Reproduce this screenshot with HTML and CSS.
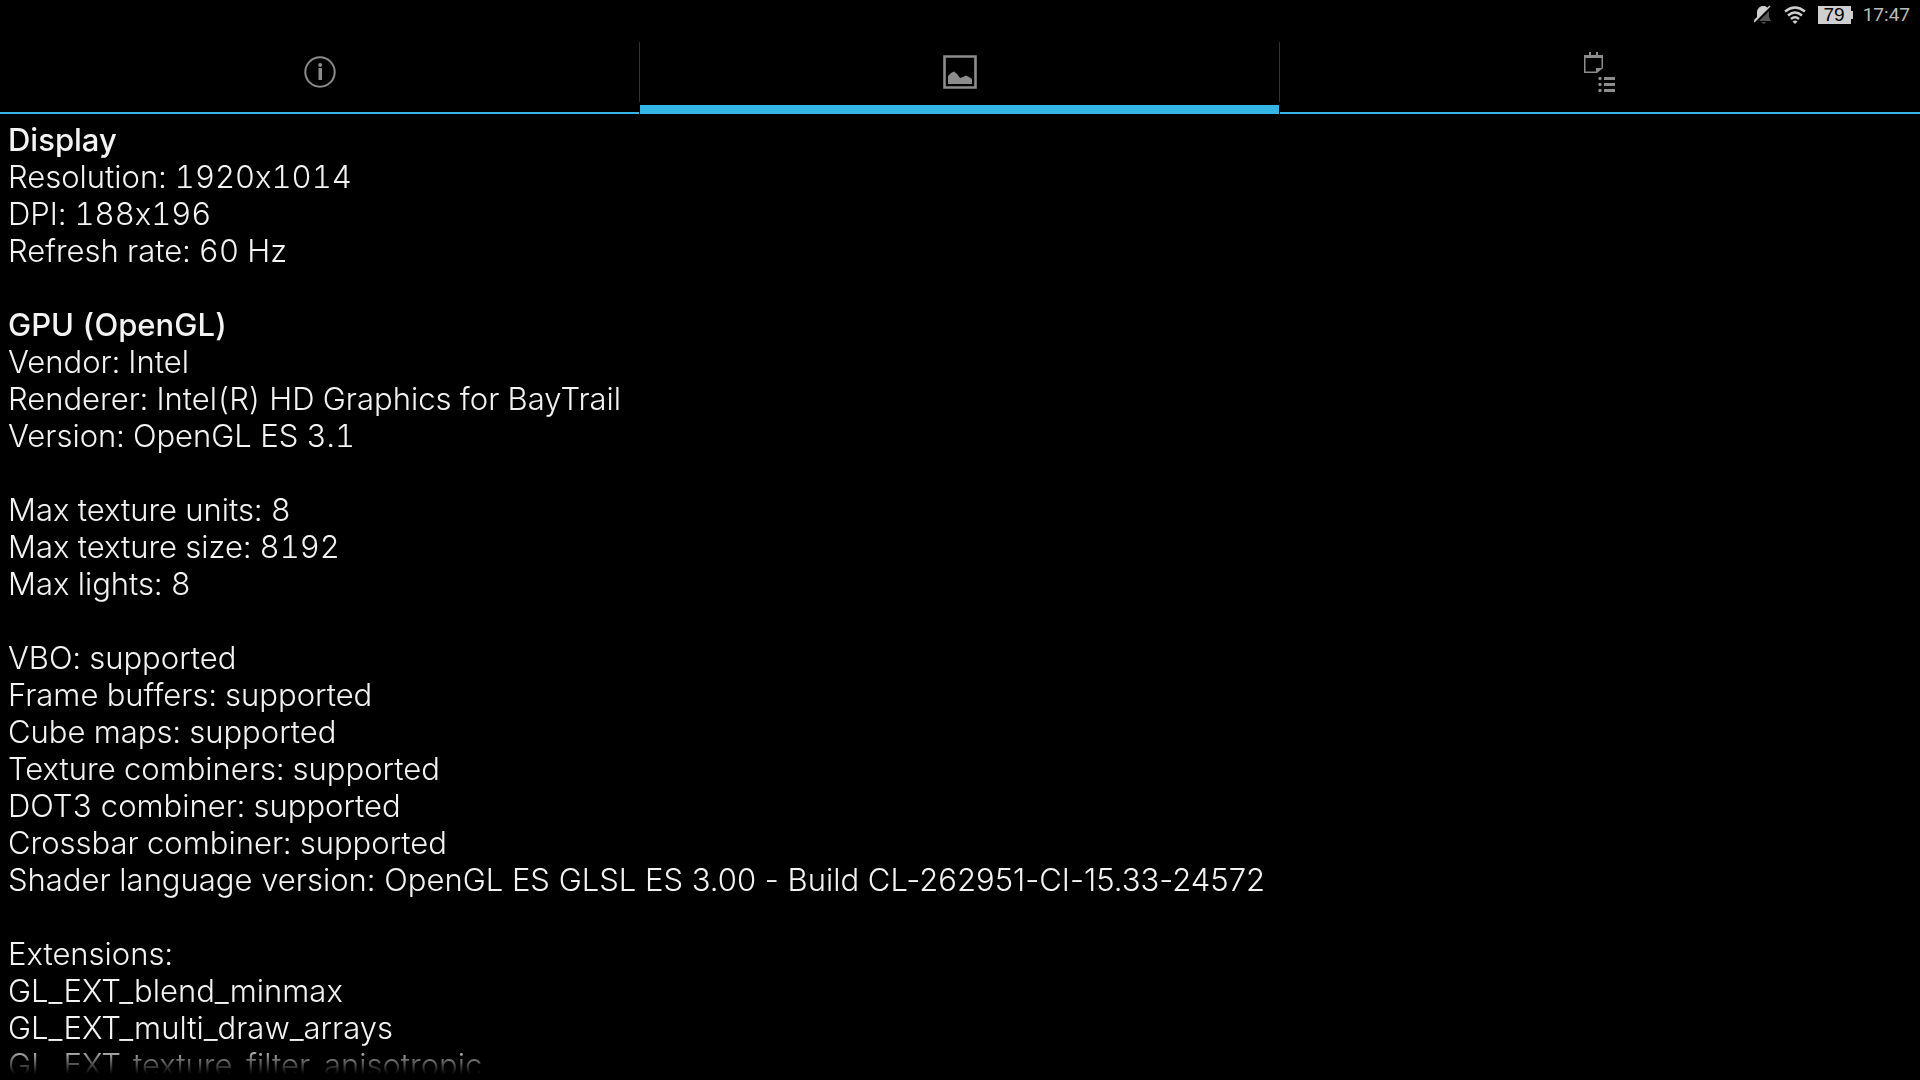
FILE: index.html
```html
<!DOCTYPE html>
<html lang="en">
<head>
<meta charset="utf-8">
<title>Device information</title>
<link rel="stylesheet" href="styles.css">
</head>
<body>
<header class="status">
  <svg width="18" height="20" viewBox="0 0 18 20" aria-label="Notifications muted">
    <path fill="#cfcfcf" d="M0 15L3 12V8C3 4 5 2 8 1H11L14 3L1 16Z"/>
    <path stroke="#cfcfcf" stroke-width="1.500" d="M0 17L16 1"/>
    <path fill="#555" d="M15 6V12L17 16H5ZM7 17H12L10 19Z"/>
  </svg>
  <svg width="22" height="18" viewBox="0 0 22 18" aria-label="Wi-Fi">
    <g fill="none" stroke="#cfcfcf" stroke-width="2.400"><path d="M1 5.500Q11 -2.500 21 5.500"/><path d="M4 9.500Q11 3.500 18 9.500"/><path d="M7 13Q11 9.500 15 13"/></g>
    <path fill="#cfcfcf" d="M8.500 15.500Q11 13.500 13.500 15.500L11 18Z"/>
  </svg>
  <span class="battery">79</span>
  <time class="clock">17:47</time>
</header>
<nav class="tabs">
  <div class="tab-cell"><button class="tab" aria-label="System">
    <svg width="32" height="32" viewBox="0 0 32 32"><circle cx="16" cy="16" r="14.700" fill="none" stroke="#8c8c8c" stroke-width="2"/><path fill="#8c8c8c" d="M14.500 12H18v12h-3.500z"/><circle cx="16.200" cy="9" r="2" fill="#8c8c8c"/></svg>
  </button></div>
  <div class="tab-cell"><button class="tab tab-active" aria-label="Graphics">
    <svg width="34" height="34" viewBox="0 0 34 34"><path d="M1.500 1.500h31v31h-31z" fill="none" stroke="#8c8c8c" stroke-width="2.600"/><path fill="#8c8c8c" d="M5 29V21L8 18L11 16.500L14 19L17 23L20 22L23 20.500L26 22L29 24V29Z"/></svg>
  </button></div>
  <div class="tab-cell"><button class="tab" aria-label="Features">
    <svg width="32" height="40" viewBox="0 0 32 40"><path fill="#8c8c8c" fill-rule="evenodd" d="M5 0h2v3h5V0h2v3h5v13l-6 5H0V3h5zM1.500 6v13.500H12V16h5.500V6z"/><path fill="#8c8c8c" d="M20 25h11v3H20zM20 31h11v3H20zM20 37h11v3H20z"/><circle cx="16" cy="26.500" r="1.700" fill="#8c8c8c"/><circle cx="16" cy="32.500" r="1.700" fill="#8c8c8c"/><circle cx="16" cy="38.500" r="1.700" fill="#8c8c8c"/></svg>
  </button></div>
</nav>
<main class="content">
  <section class="group">
    <h2>Display</h2>
    <p>Resolution: 1920x1014</p>
    <p>DPI: 188x196</p>
    <p>Refresh rate: 60 Hz</p>
  </section>
  <section class="group">
    <h2>GPU (OpenGL)</h2>
    <p>Vendor: Intel</p>
    <p>Renderer: Intel(R) HD Graphics for BayTrail</p>
    <p>Version: OpenGL ES 3.1</p>
  </section>
  <section class="group">
    <p>Max texture units: 8</p>
    <p>Max texture size: 8192</p>
    <p>Max lights: 8</p>
  </section>
  <section class="group">
    <p>VBO: supported</p>
    <p>Frame buffers: supported</p>
    <p>Cube maps: supported</p>
    <p>Texture combiners: supported</p>
    <p>DOT3 combiner: supported</p>
    <p>Crossbar combiner: supported</p>
    <p class="build">Shader language version: OpenGL ES GLSL ES 3.00 - Build CL-262951-CI-15.33-24572</p>
  </section>
  <section class="group">
    <p>Extensions:</p>
    <p>GL_EXT_blend_minmax</p>
    <p>GL_EXT_multi_draw_arrays</p>
    <p>GL_EXT_texture_filter_anisotropic</p>
  </section>
</main>
</body>
</html>
```
FILE: styles.css
```css
* {
  box-sizing: border-box;
  margin: 0;
}

body {
  display: flex;
  flex-direction: column;
  height: 100vh;
  overflow: hidden;
  background: #000;
  color: #f3f3f3;
  font-family: Inter, "Liberation Sans", sans-serif;
  font-weight: 300;
}

.status {
  display: flex;
  align-items: center;
  justify-content: flex-end;
  gap: 12px;
  height: 30px;
  padding-right: 10px;
}

.battery {
  position: relative;
  padding: 0 6px;
  background: #cfcfcf;
  color: #000;
  font: 19px/18px "Liberation Sans", sans-serif;
}

.battery::after {
  content: "";
  position: absolute;
  top: 5px;
  right: -2px;
  width: 2px;
  height: 8px;
  background: #cfcfcf;
}

.clock {
  color: #bbb;
  font: 19px/24px Roboto, sans-serif;
}

.tabs {
  display: grid;
  grid-template-columns: repeat(3, 1fr);
}

.tab-cell {
  display: flex;
  height: 84px;
}

.tab-cell:not(:last-child)::after {
  content: "";
  width: 1px;
  height: 60px;
  margin-top: 12px;
  background: #333;
}

.tab {
  display: flex;
  flex: 1;
  align-items: center;
  justify-content: center;
  padding: 0;
  border: 0;
  background: none;
  box-shadow: inset 0 -2px #33b5e5;
}

.tab-active {
  box-shadow: inset 0 -9px #33b5e5;
}

.content {
  flex: 1;
  min-height: 0;
  margin-bottom: 6px;
  padding: 7px 8px 0;
  overflow: hidden;
  font-size: 31px;
  line-height: 37px;
  font-feature-settings: "calt" 0;
  font-variant-numeric: tabular-nums;
  mask-image: linear-gradient(#000 calc(100% - 30px), transparent);
}

.group {
  margin-bottom: 37px;
}

.build {
  font-variant-numeric: normal;
}

h2 {
  font-size: inherit;
  font-weight: 500;
}
```
